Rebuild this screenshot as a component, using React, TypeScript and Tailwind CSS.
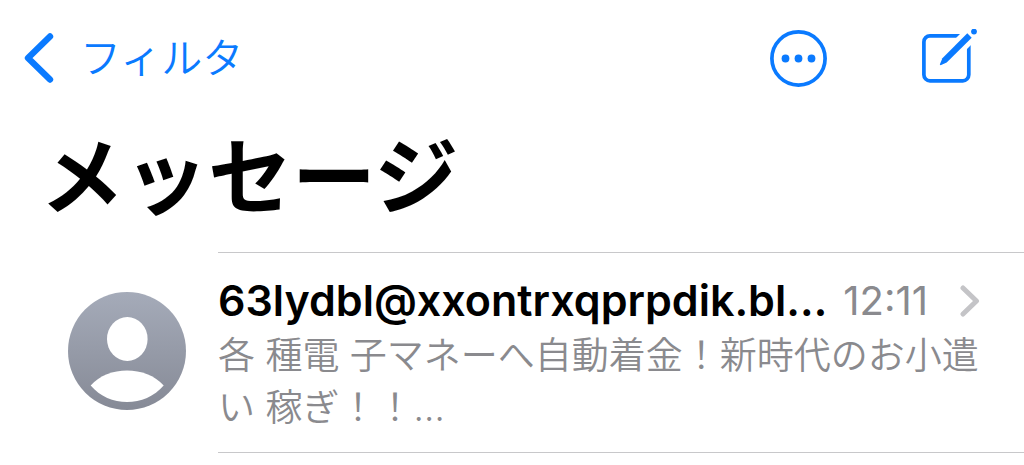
interface Message {
  id: number
  sender: string
  time: string
  preview: string
}

const messages: Message[] = [
  {
    id: 1,
    sender: '63lydbl@xxontrxqprpdik.bl…',
    time: '12:11',
    preview: '各 種電 子マネーへ自動着金！新時代のお小遣い 稼ぎ！！…',
  },
]

function BackIcon() {
  return (
    <svg width="32" height="52" viewBox="0 0 32 52" fill="none" aria-hidden="true">
      <path d="M26 4.5 L4 26 L26 47.5" stroke="currentColor" strokeWidth="6.4" strokeLinecap="round" strokeLinejoin="round" />
    </svg>
  )
}

function MoreIcon() {
  return (
    <svg width="58" height="58" viewBox="0 0 58 58" fill="none" aria-hidden="true">
      <circle cx="28.5" cy="29.5" r="26.6" stroke="currentColor" strokeWidth="3.7" />
      <circle cx="15.5" cy="29.5" r="3.9" fill="currentColor" />
      <circle cx="28.5" cy="29.5" r="3.9" fill="currentColor" />
      <circle cx="41.5" cy="29.5" r="3.9" fill="currentColor" />
    </svg>
  )
}

function ComposeIcon() {
  return (
    <svg width="58" height="58" viewBox="0 0 58 58" fill="none" aria-hidden="true">
      <rect x="3.9" y="6.9" width="44.9" height="44.9" rx="6" stroke="currentColor" strokeWidth="3.7" />
      {/* clears the frame around the pencil */}
      <path d="M32 24 L58 -2" stroke="white" strokeWidth="15.5" />
      <path d="M47.3 4.3 L51.7 8.7 L26.7 33.5 L20.6 36.3 L19.8 35.5 L22.4 29.3 Z" fill="currentColor" />
      <circle cx="54" cy="2.6" r="2.9" fill="currentColor" />
    </svg>
  )
}

function Avatar() {
  return (
    <svg className="mb-1 shrink-0" width="118" height="118" viewBox="0 0 118 118" aria-hidden="true">
      <defs>
        <linearGradient id="avatar" x1="0" y1="0" x2="0" y2="1">
          <stop offset="0" stopColor="#a5abb9" />
          <stop offset="1" stopColor="#868a96" />
        </linearGradient>
      </defs>
      <circle cx="59" cy="59" r="59" fill="url(#avatar)" />
      <ellipse cx="59.3" cy="47" rx="20.3" ry="22" fill="white" />
      <path d="M22.7 93.5 C40 73.5 78 73.5 95.7 93.5 C77 115.5 41 115.5 22.7 93.5 Z" fill="white" />
    </svg>
  )
}

function ChevronIcon() {
  return (
    <svg className="shrink-0 text-[#c4c4c7]" width="20" height="32" viewBox="0 0 20 32" fill="none" aria-hidden="true">
      <path d="M3 3 L16.5 16 L3 29" stroke="currentColor" strokeWidth="5" strokeLinecap="round" strokeLinejoin="round" />
    </svg>
  )
}

function MessageRow({ message }: { message: Message }) {
  return (
    <li className="flex items-center gap-8 pl-[68px]">
      <Avatar />
      <div className="min-w-0 flex-1 border-b border-[#c8c8ca] pt-5 pb-[18px] pr-10">
        <div className="flex items-center pr-1">
          <h2 className="min-w-0 flex-1 truncate text-[43px] leading-[55px] font-semibold text-black">{message.sender}</h2>
          <time className="ml-3 text-[40px] leading-[55px] text-[#8a8a8e]">{message.time}</time>
          <span className="ml-8">
            <ChevronIcon />
          </span>
        </div>
        <p className="mt-0.5 text-[37px] leading-[52px] font-[350] text-[#8a8a8e]">{message.preview}</p>
      </div>
    </li>
  )
}

export default function App() {
  return (
    <main lang="ja" className="min-h-screen bg-white font-['Inter','Noto_Sans_CJK_JP',sans-serif]">
      <header>
        <nav className="flex items-center justify-between pt-7 pr-[46px] pl-6 text-[#0a7aff]">
          <button type="button" className="flex items-center gap-6 text-[41px] leading-[60px] font-[350]">
            <BackIcon />
            フィルタ
          </button>
          <div className="flex items-center gap-[92px]">
            <button type="button" aria-label="その他">
              <MoreIcon />
            </button>
            <button type="button" aria-label="新規メッセージ">
              <ComposeIcon />
            </button>
          </div>
        </nav>
        <h1 className="pt-8 pl-10 text-[84px] leading-[116px] font-bold text-black">メッセージ</h1>
      </header>
      <section className="pt-4">
        <div className="ml-[218px] border-t border-[#c8c8ca]" />
        <ul>
          {messages.map((message) => (
            <MessageRow key={message.id} message={message} />
          ))}
        </ul>
      </section>
    </main>
  )
}
